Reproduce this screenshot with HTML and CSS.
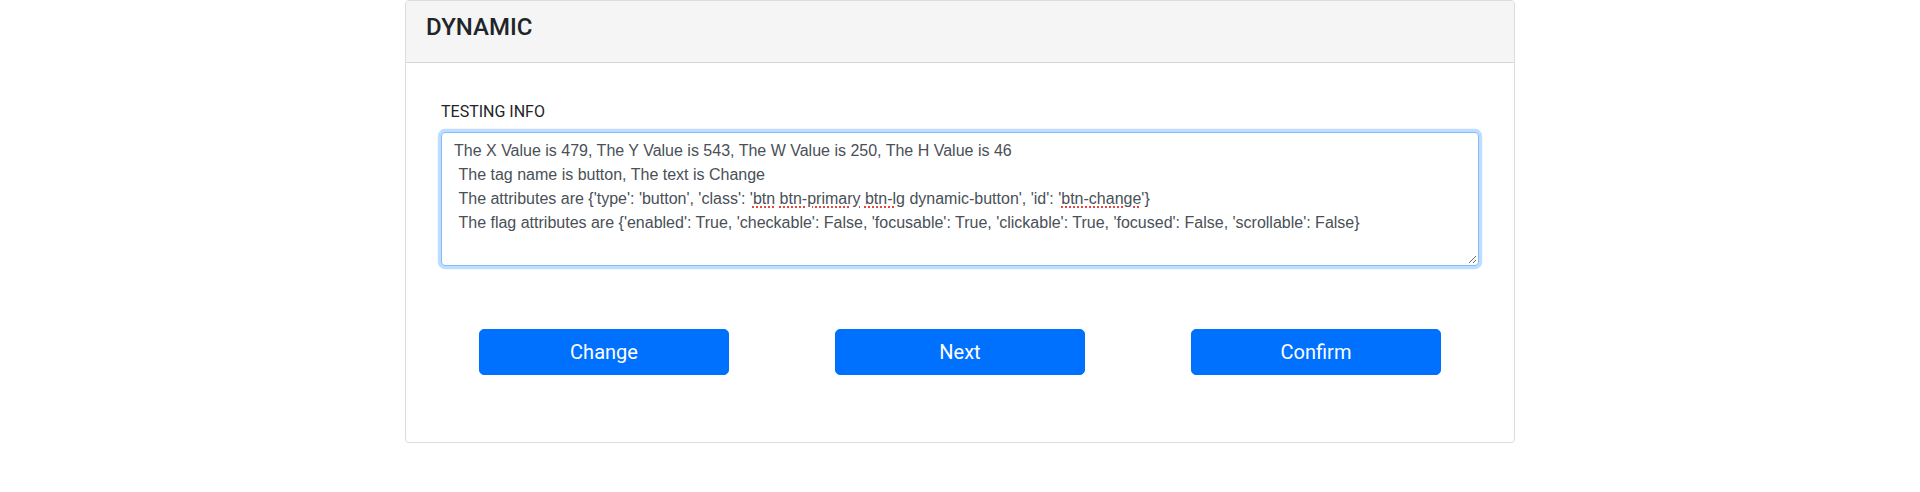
FILE: index.html
```html
<!DOCTYPE html>
<html lang="en">
<head>
<meta charset="utf-8">
<title>Dynamic</title>
<link rel="stylesheet" href="styles.css">
</head>
<body>
<div class="page">
  <div class="card">
    <div class="card-header">
      <h4 class="card-title">DYNAMIC</h4>
    </div>
    <div class="card-body">
      <div class="info">
        <label class="info-label">TESTING INFO</label>
        <div class="info-box" role="textbox" aria-multiline="true"><div class="info-text">The X Value is 479, The Y Value is 543, The W Value is 250, The H Value is 46
 The tag name is button, The text is Change
 The attributes are {'type': 'button', 'class': '<span class="spell">btn</span> <span class="spell">btn-primary</span> <span class="spell">btn-lg</span> dynamic-button', 'id': '<span class="spell">btn-change</span>'}
 The flag attributes are {'enabled': True, 'checkable': False, 'focusable': True, 'clickable': True, 'focused': False, 'scrollable': False}</div><svg class="grip" width="9" height="9" viewBox="0 0 9 9"><path d="M1 8 L8 1 M5 8 L8 5" stroke="#6b6b6b" stroke-width="1" fill="none"/></svg></div>
      </div>
      <div class="actions">
        <button class="btn" type="button">Change</button>
        <button class="btn" type="button">Next</button>
        <button class="btn" type="button">Confirm</button>
      </div>
    </div>
  </div>
</div>
</body>
</html>
```

FILE: styles.css
```css
html, body {
  margin: 0;
  padding: 0;
  background: #ffffff;
}

body {
  font-family: Roboto, "Liberation Sans", Arial, sans-serif;
  font-size: 16px;
  line-height: 1.5;
  color: #212529;
}

.page {
  width: 1110px;
  margin: 0 auto;
}

.card {
  border: 1px solid #dcdcdc;
  border-radius: 4px;
  background: #ffffff;
  overflow: hidden;
}

.card-header {
  padding: 12px 20px;
  background: #f5f5f5;
  border-bottom: 1px solid #d6d6d6;
}

.card-title {
  margin: 0 0 8px;
  font-size: 24px;
  font-weight: 500;
  line-height: 28.8px;
  color: #212529;
}

.card-body {
  padding: 20px;
}

.info {
  padding: 17px 15px 0;
}

.info-label {
  display: block;
  margin-bottom: 8px;
  line-height: 24px;
  color: #212529;
}

.info-box {
  position: relative;
  box-sizing: border-box;
  height: 134px;
  padding: 6px 12px;
  border: 1px solid #80bdff;
  border-radius: 4px;
  box-shadow: 0 0 0 3.2px rgba(0, 123, 255, 0.25);
  background: #ffffff;
  color: #495057;
  font-family: "Liberation Sans", Arial, sans-serif;
  font-size: 16px;
  line-height: 24px;
}

.info-text {
  white-space: pre-wrap;
}

.spell {
  text-decoration: underline dotted #e5453d;
  text-decoration-thickness: 2px;
  text-underline-offset: 3px;
}

.grip {
  position: absolute;
  right: 1px;
  bottom: 1px;
}

.actions {
  display: flex;
  justify-content: space-around;
  margin: 63px 0 47px;
}

.btn {
  box-sizing: border-box;
  width: 250px;
  height: 46px;
  padding: 8px 16px;
  border: 1px solid #0070ff;
  border-radius: 5px;
  background: #0070ff;
  color: #ffffff;
  font-family: Roboto, "Liberation Sans", Arial, sans-serif;
  font-size: 20px;
  line-height: 28px;
  cursor: pointer;
}
```
